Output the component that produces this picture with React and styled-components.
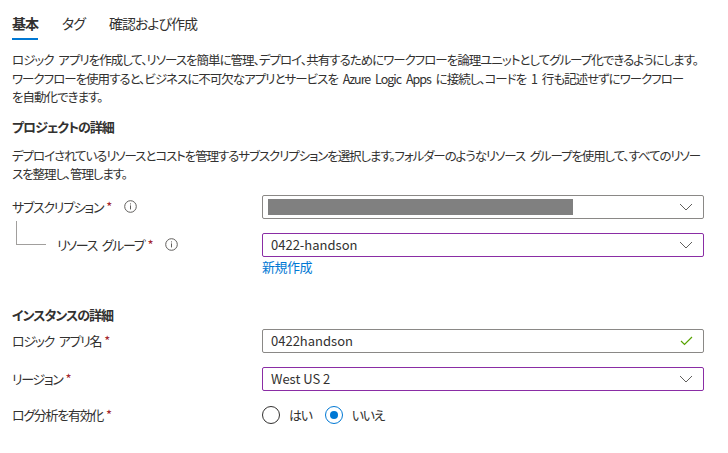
import React, { useState } from 'react';
import styled, { createGlobalStyle } from 'styled-components';

const GlobalStyle = createGlobalStyle`
  body {
    margin: 0;
    background: #ffffff;
    font-family: "Segoe UI", "Noto Sans CJK JP", "Noto Sans", sans-serif;
    font-feature-settings: "palt" 1;
    color: #323130;
  }
`;

function Chevron() {
  return (
    <svg width="14" height="8" viewBox="0 0 14 8">
      <path d="M1 1 L7 7 L13 1" fill="none" stroke="#605e5c" strokeWidth="1" />
    </svg>
  );
}

function InfoIcon() {
  return (
    <svg width="13" height="13" viewBox="0 0 13 13">
      <circle cx="6.5" cy="6.5" r="5.8" fill="none" stroke="#605e5c" strokeWidth="1" />
      <rect x="6" y="5.4" width="1" height="4" fill="#605e5c" />
      <rect x="6" y="3.4" width="1" height="1" fill="#605e5c" />
    </svg>
  );
}

function Check() {
  return (
    <svg width="13" height="10" viewBox="0 0 13 10">
      <path d="M1 5 L4.5 8.5 L12 1" fill="none" stroke="#57a300" strokeWidth="1.2" />
    </svg>
  );
}

export default function App() {
  const [log, setLog] = useState('no');
  const tabs = ['基本', 'タグ', '確認および作成'];

  return (
    <Page>
      <GlobalStyle />
      <Tabs>
        {tabs.map((t, i) => (
          <Tab key={t} active={i === 0}>{t}</Tab>
        ))}
      </Tabs>

      <Text spacing={-1.0}>
        ロジック アプリを作成して、リソースを簡単に管理、デプロイ、共有するためにワークフローを論理ユニットとしてグループ化できるようにします。<br />
        ワークフローを使用すると、ビジネスに不可欠なアプリとサービスを Azure Logic Apps に接続し、コードを 1 行も記述せずにワークフロー<br />
        を自動化できます。
      </Text>

      <Heading>プロジェクトの詳細</Heading>
      <Text spacing={-1.1}>
        デプロイされているリソースとコストを管理するサブスクリプションを選択します。フォルダーのようなリソース グループを使用して、すべてのリソー<br />
        スを整理し、管理します。
      </Text>

      <Row top={11}>
        <Label>
          サブスクリプション<Star>*</Star>
          <IconSlot><InfoIcon /></IconSlot>
        </Label>
        <Field>
          <Select>
            <Redacted />
            <Chevron />
          </Select>
        </Field>
      </Row>

      <Row top={14}>
        <Label tree>
          <TreeLine />
          リソース グループ<Star>*</Star>
          <IconSlot><InfoIcon /></IconSlot>
        </Label>
        <Field>
          <Select purple>
            <Value>0422-handson</Value>
            <Chevron />
          </Select>
          <LinkText>新規作成</LinkText>
        </Field>
      </Row>

      <Heading top={30}>インスタンスの詳細</Heading>

      <Row top={5}>
        <Label>ロジック アプリ名<Star>*</Star></Label>
        <Field>
          <Select>
            <Value>0422handson</Value>
            <Check />
          </Select>
        </Field>
      </Row>

      <Row top={14}>
        <Label>リージョン<Star>*</Star></Label>
        <Field>
          <Select purple>
            <Value>West US 2</Value>
            <Chevron />
          </Select>
        </Field>
      </Row>

      <Row top={12}>
        <Label>ログ分析を有効化<Star>*</Star></Label>
        <Field>
          <Radios>
            <RadioItem onClick={() => setLog('yes')}>
              <Radio checked={log === 'yes'} />
              はい
            </RadioItem>
            <RadioItem onClick={() => setLog('no')}>
              <Radio checked={log === 'no'} />
              いいえ
            </RadioItem>
          </Radios>
        </Field>
      </Row>
    </Page>
  );
}

const Page = styled.div`
  width: 704px;
  padding: 0 12px;
  font-size: 13px;
  letter-spacing: -1.3px;
  word-spacing: 3px;
`;

const Tabs = styled.div`
  display: flex;
  gap: 24px;
  height: 40px;
  align-items: stretch;
`;

const Tab = styled.div`
  display: flex;
  align-items: center;
  padding-top: 8px;
  font-size: 14px;
  letter-spacing: -1px;
  font-weight: ${p => (p.active ? 600 : 400)};
  border-bottom: 2px solid ${p => (p.active ? '#0078d4' : 'transparent')};
  box-sizing: border-box;
  height: 40px;
`;

const Text = styled.p`
  margin: 11px 0 0;
  font-size: 12.5px;
  line-height: 18.5px;
  white-space: nowrap;
  letter-spacing: ${p => p.spacing}px;
`;

const Heading = styled.h2`
  margin: ${p => p.top ?? 11}px 0 0;
  font-size: 13px;
  font-weight: 700;
  line-height: 18px;
  letter-spacing: -1px;
`;

const Row = styled.div`
  display: grid;
  grid-template-columns: 250px 442px;
  align-items: start;
  margin-top: ${p => p.top}px;
`;

const Label = styled.div`
  position: relative;
  display: flex;
  align-items: center;
  height: 24px;
  white-space: pre;
  padding-left: ${p => (p.tree ? 45 : 0)}px;
`;

const TreeLine = styled.span`
  position: absolute;
  left: 4px;
  top: -12px;
  width: 29px;
  height: 23px;
  border-left: 1px solid #a19f9d;
  border-bottom: 1px solid #a19f9d;
`;

const Star = styled.span`
  color: #a4262c;
  margin-left: 3px;
`;

const IconSlot = styled.span`
  display: inline-flex;
  margin-left: 13px;
`;

const Field = styled.div`
  display: flex;
  flex-direction: column;
`;

const Select = styled.div`
  height: 24px;
  box-sizing: border-box;
  border: 1px solid ${p => (p.purple ? '#8a2da5' : '#8a8886')};
  border-radius: 2px;
  display: flex;
  align-items: center;
  justify-content: space-between;
  padding: 0 10px 0 8px;
`;

const Redacted = styled.div`
  width: 305px;
  height: 16px;
  background: #808080;
  margin-left: -3px;
`;

const Value = styled.span`
  font-size: 13px;
  letter-spacing: 0;
  word-spacing: 0;
`;

const LinkText = styled.span`
  color: #0078d4;
  margin-top: 1px;
  line-height: 18px;
  letter-spacing: -0.5px;
`;

const Radios = styled.div`
  display: flex;
  align-items: center;
  gap: 13px;
  height: 24px;
`;

const RadioItem = styled.label`
  display: flex;
  align-items: center;
  gap: 9px;
  cursor: pointer;
`;

const Radio = styled.span`
  width: 18px;
  height: 18px;
  box-sizing: border-box;
  border-radius: 50%;
  border: 1px solid ${p => (p.checked ? '#0078d4' : '#323130')};
  display: inline-flex;
  align-items: center;
  justify-content: center;
  &::after {
    content: '';
    width: 8px;
    height: 8px;
    border-radius: 50%;
    background: ${p => (p.checked ? '#0078d4' : 'transparent')};
  }
`;
